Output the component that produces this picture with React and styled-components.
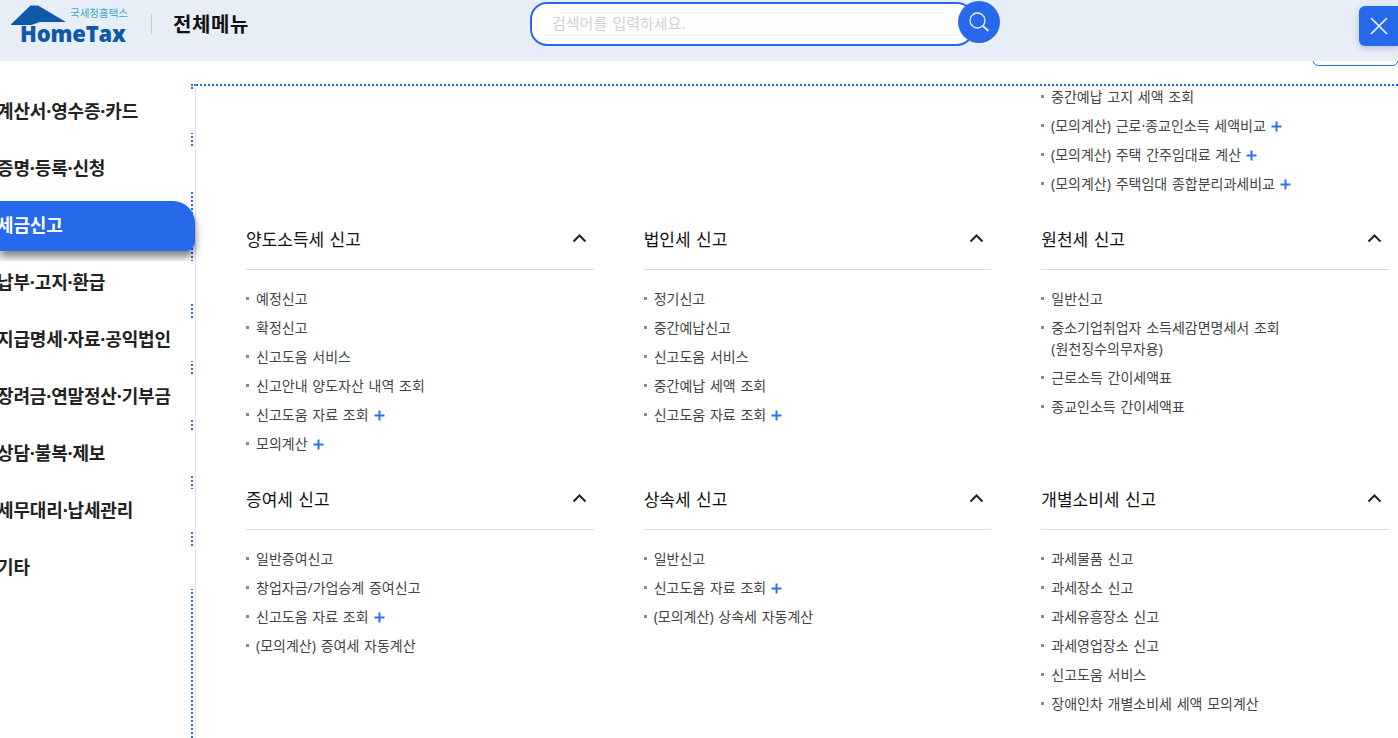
import React from 'react';
import styled, { createGlobalStyle } from 'styled-components';

const BLUE = '#2669ea';

const GlobalStyle = createGlobalStyle`
  html, body {
    margin: 0;
    padding: 0;
    height: 100%;
    overflow: hidden;
    background: #fff;
    font-family: "Noto Sans", "Noto Sans CJK KR", sans-serif;
  }
  * { box-sizing: border-box; }
`;

const Page = styled.div`
  position: relative;
  width: 1398px;
  height: 738px;
  overflow: hidden;
  display: flex;
  flex-direction: column;
`;

const Header = styled.header`
  position: relative;
  z-index: 2;
  flex: none;
  height: 61px;
  background: #e7eef8;
  display: flex;
  align-items: flex-start;
`;

const Logo = styled.div`
  position: relative;
  width: 118px;
  height: 42px;
  margin: 5px 0 0 10px;
  flex: none;
`;

const LogoRoof = styled.svg`
  position: absolute;
  left: 0;
  top: 0;
`;

const LogoSub = styled.span`
  position: absolute;
  right: 0;
  top: 1px;
  font-size: 10.5px;
  line-height: 14px;
  color: #3ba6c4;
  white-space: nowrap;
`;

const LogoName = styled.span`
  position: absolute;
  left: 10px;
  top: 13px;
  font-family: "Open Sans", "Liberation Sans", sans-serif;
  font-size: 22px;
  line-height: 30px;
  font-weight: 800;
  letter-spacing: -0.2px;
  color: #0f5aa8;
  white-space: nowrap;
`;

const Divider = styled.div`
  width: 1px;
  height: 20px;
  margin: 14px 21px 0 23px;
  background: #c9ccd2;
`;

const Title = styled.h1`
  margin: 10px 0 0;
  font-size: 20px;
  line-height: 29px;
  font-weight: 700;
  letter-spacing: 0.6px;
  color: #111;
  width: 357px;
`;

const SearchWrap = styled.div`
  display: flex;
  align-items: flex-start;
  margin-top: 1px;
`;

const SearchInput = styled.div`
  width: 444px;
  height: 44px;
  margin-top: 1px;
  border: 2px solid ${BLUE};
  border-radius: 17px;
  background: #fff;
  padding-left: 20px;
  font-size: 15px;
  word-spacing: 1.3px;
  line-height: 39px;
  color: #d2d2d2;
`;

const SearchButton = styled.button`
  width: 42px;
  height: 42px;
  margin-left: -16px;
  border: 0;
  padding: 0;
  border-radius: 50%;
  background: ${BLUE};
  display: flex;
  align-items: center;
  justify-content: center;
  position: relative;
`;

const CloseButton = styled.button`
  position: absolute;
  left: 1359px;
  top: 6px;
  width: 39px;
  height: 40px;
  border: 0;
  padding: 0;
  border-radius: 6px 0 0 6px;
  background: ${BLUE};
  box-shadow: 0 2px 6px rgba(40, 60, 110, 0.25);
  display: flex;
  align-items: center;
  justify-content: center;
`;

const HiddenTab = styled.div`
  position: absolute;
  z-index: 1;
  left: 1313px;
  top: 50px;
  width: 85px;
  height: 16px;
  background: #fff;
  border: 1px solid ${BLUE};
  border-radius: 0 0 5px 5px;
`;

const Body = styled.div`
  flex: 1;
  min-height: 0;
  display: flex;
  padding-top: 23px;
`;

const Sidebar = styled.aside`
  position: relative;
  flex: none;
  width: 196px;
  padding-top: 3px;

  &::before {
    content: '';
    position: absolute;
    left: 191px;
    top: 0;
    width: 5px;
    border-top: 2px dotted ${BLUE};
  }
`;

const SideLine = styled.div`
  height: 100%;
  border-right: 1px solid #dfe2f6;
`;

const Rail = styled.nav`
  width: 193px;
  height: 100%;
  border-right: 2px dotted ${BLUE};
  padding-top: 3px;
  display: flex;
  flex-direction: column;
  gap: 14px;
`;

const SideItem = styled.div`
  height: ${p => (p.$active ? 50 : 43)}px;
  margin: ${p => (p.$active ? '-3px -4px -4px 0' : '0 -2px 0 0')};
  background: ${p => (p.$active ? BLUE : '#fff')};
  color: ${p => (p.$active ? '#fff' : '#222')};
  border-radius: ${p => (p.$active ? '0 22px 9px 0' : '0')};
  box-shadow: ${p => (p.$active ? '0 6px 8px rgba(0, 0, 0, 0.5)' : 'none')};
  position: relative;
  font-size: 18px;
  font-weight: 700;
  line-height: ${p => (p.$active ? 48 : 43)}px;
  letter-spacing: -0.15px;
  white-space: nowrap;
  overflow: hidden;
  text-indent: -3px;
`;

const Main = styled.main`
  flex: 1;
  min-width: 0;
  border-top: 2px dotted ${BLUE};
  padding: 0 9px 0 50px;
  overflow: hidden;
`;

const TopList = styled.ul`
  list-style: none;
  margin: -4px 0 0;
  padding: 0 0 0 795px;
`;

const Grid = styled.div`
  display: grid;
  grid-template-columns: repeat(3, 347.67px);
  column-gap: 50px;
  row-gap: 11px;
  margin-top: 11px;
`;

const Section = styled.section``;

const SectionHead = styled.div`
  height: 61px;
  border-bottom: 1px solid #dcdcdc;
  display: flex;
  align-items: flex-start;
  justify-content: space-between;
  padding: 18px 7px 0 0;
`;

const SectionTitle = styled.h2`
  margin: 0;
  font-size: 17px;
  line-height: 25px;
  font-weight: 400;
  word-spacing: 1px;
  color: #111;
`;

const List = styled.ul`
  list-style: none;
  margin: 0;
  padding: 14px 0 0;
`;

const Item = styled.li`
  position: relative;
  padding: 4px 0 4px 10px;
  font-size: 14px;
  line-height: 21px;
  word-spacing: 1.1px;
  color: #444;

  &::before {
    content: '';
    position: absolute;
    left: 0;
    top: 13px;
    width: 3px;
    height: 3px;
    background: #8a8a8a;
  }
`;

const PlusIcon = styled.svg`
  margin-left: 5px;
  vertical-align: -1px;
`;

const Plus = () => (
  <PlusIcon width="11" height="11" viewBox="0 0 11 11">
    <path d="M5.5 0.5v10M0.5 5.5h10" stroke="#2f72ea" strokeWidth="2" fill="none" />
  </PlusIcon>
);

const ChevronIcon = styled.svg`
  margin-top: 6px;
`;

const Chevron = () => (
  <ChevronIcon width="15" height="10" viewBox="0 0 15 10">
    <path d="M1.5 8.5 7.5 2.5l6 6" stroke="#222" strokeWidth="2" fill="none" />
  </ChevronIcon>
);

const menu = [
  '계산서·영수증·카드',
  '증명·등록·신청',
  '세금신고',
  '납부·고지·환급',
  '지급명세·자료·공익법인',
  '장려금·연말정산·기부금',
  '상담·불복·제보',
  '세무대리·납세관리',
  '기타',
];

const topItems = [
  ['중간예납 고지 세액 조회'],
  ['(모의계산) 근로·종교인소득 세액비교', true],
  ['(모의계산) 주택 간주임대료 계산', true],
  ['(모의계산) 주택임대 종합분리과세비교', true],
];

const sections = [
  {
    title: '양도소득세 신고',
    items: [['예정신고'], ['확정신고'], ['신고도움 서비스'], ['신고안내 양도자산 내역 조회'], ['신고도움 자료 조회', true], ['모의계산', true]],
  },
  {
    title: '법인세 신고',
    items: [['정기신고'], ['중간예납신고'], ['신고도움 서비스'], ['중간예납 세액 조회'], ['신고도움 자료 조회', true]],
  },
  {
    title: '원천세 신고',
    items: [['일반신고'], ['중소기업취업자 소득세감면명세서 조회\n(원천징수의무자용)'], ['근로소득 간이세액표'], ['종교인소득 간이세액표']],
  },
  {
    title: '증여세 신고',
    items: [['일반증여신고'], ['창업자금/가업승계 증여신고'], ['신고도움 자료 조회', true], ['(모의계산) 증여세 자동계산']],
  },
  {
    title: '상속세 신고',
    items: [['일반신고'], ['신고도움 자료 조회', true], ['(모의계산) 상속세 자동계산']],
  },
  {
    title: '개별소비세 신고',
    items: [['과세물품 신고'], ['과세장소 신고'], ['과세유흥장소 신고'], ['과세영업장소 신고'], ['신고도움 서비스'], ['장애인차 개별소비세 세액 모의계산']],
  },
];

const Lines = styled.span`
  white-space: pre-line;
`;

function MenuItems({ items }) {
  return items.map(([label, more]) => (
    <Item key={label}>
      <Lines>{label}</Lines>
      {more && <Plus />}
    </Item>
  ));
}

export default function App() {
  return (
    <Page>
      <GlobalStyle />
      <Header>
        <Logo>
          <LogoRoof width="60" height="24" viewBox="0 0 60 24">
            <path d="M1 19.3 20.5 0.5h7.5l28 16.5H30L21.5 20H1z" fill="#0f5aa8" />
          </LogoRoof>
          <LogoSub>국세청홈택스</LogoSub>
          <LogoName>HomeTax</LogoName>
        </Logo>
        <Divider />
        <Title>전체메뉴</Title>
        <SearchWrap>
          <SearchInput>검색어를 입력하세요.</SearchInput>
          <SearchButton aria-label="검색">
            <svg width="24" height="24" viewBox="0 0 24 24" fill="none" stroke="#e8f0ff">
              <circle cx="10.5" cy="10.5" r="7.5" strokeWidth="1.3" />
              <path d="M16 16l5.5 5" strokeWidth="1.8" />
            </svg>
          </SearchButton>
        </SearchWrap>
        <CloseButton aria-label="닫기">
          <svg width="20" height="20" viewBox="0 0 20 20" fill="none" stroke="#eef3ff" strokeWidth="1.7">
            <path d="M2 2l16 16M18 2L2 18" />
          </svg>
        </CloseButton>
      </Header>
      <HiddenTab />
      <Body>
        <Sidebar>
          <SideLine>
            <Rail>
              {menu.map(label => (
                <SideItem key={label} $active={label === '세금신고'}>
                  {label}
                </SideItem>
              ))}
            </Rail>
          </SideLine>
        </Sidebar>
        <Main>
          <TopList>
            <MenuItems items={topItems} />
          </TopList>
          <Grid>
            {sections.map(section => (
              <Section key={section.title}>
                <SectionHead>
                  <SectionTitle>{section.title}</SectionTitle>
                  <Chevron />
                </SectionHead>
                <List>
                  <MenuItems items={section.items} />
                </List>
              </Section>
            ))}
          </Grid>
        </Main>
      </Body>
    </Page>
  );
}
